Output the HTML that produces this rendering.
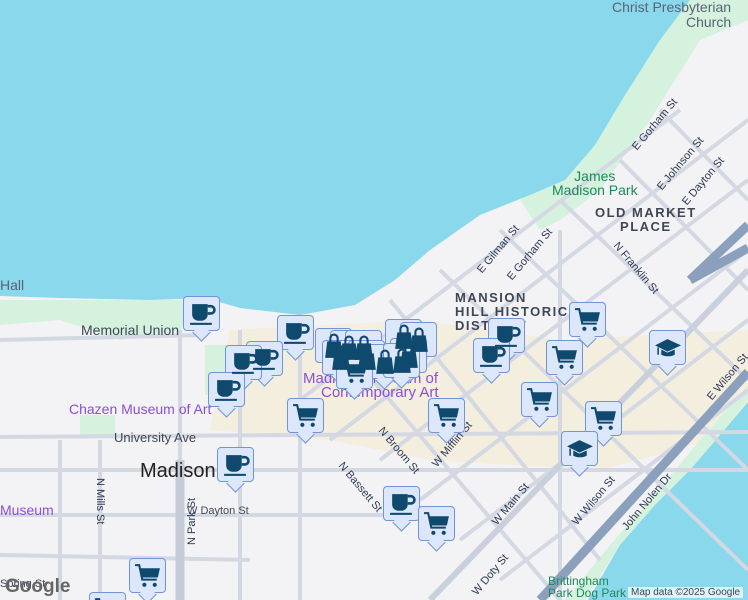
<!DOCTYPE html>
<html style="width:748px;height:600px;overflow:hidden"><head><meta charset="utf-8"><style>
body{margin:0;width:748px;height:600px;overflow:hidden;background:#f3f2f4;font-family:"Liberation Sans",sans-serif;position:relative}
#wrap{position:absolute;left:0;top:0;width:748px;height:600px;overflow:hidden}
svg.map{position:absolute;left:0;top:0}
.m{position:absolute;width:37px;height:35px;background:#dce7fb;border:1.5px solid #6f95d8;border-radius:4px;box-sizing:border-box}
.m:after{content:"";position:absolute;left:11px;bottom:-9px;width:12px;height:12px;background:#dce7fb;border-right:1.5px solid #6f95d8;border-bottom:1.5px solid #6f95d8;transform:rotate(45deg)}
.m svg{position:absolute;left:4px;top:4px;width:28px;height:26px;z-index:2}
.l{position:absolute;font-size:13px;color:#3f4756;white-space:nowrap}
.s{position:absolute;font-size:11px;color:#2c3a55;white-space:nowrap;transform-origin:left top}
</style></head><body><div id="wrap">
<svg class="map" width="748" height="600">
<rect width="748" height="600" fill="#f3f2f4"/>
<path d="M230 330 L420 320 L560 340 L748 330 L748 430 L600 470 L430 460 L330 440 L210 430 Z" fill="#f4ecd9" opacity="0.8"/>
<path d="M0 300 L200 300 L180 330 L120 340 L60 320 L0 325Z" fill="#d5f2de"/>
<path d="M520 200 L590 150 L640 60 L690 0 L748 0 L748 20 L700 40 L650 120 L600 190 L560 220 L540 230Z" fill="#d5f2de"/>
<path d="M565 600 L610 545 L650 500 L700 440 L748 385 L748 400 L690 470 L655 505 L620 545 L585 600Z" fill="#d5f2de"/>
<rect x="205" y="345" width="30" height="50" fill="#d5f2de"/>
<rect x="80" y="415" width="35" height="20" fill="#d5f2de"/>
<path d="M0 0 L690 0 L660 40 L625 95 L595 145 L565 180 L530 195 L480 215 L430 250 L395 280 L355 305 L300 315 L240 308 L205 298 L150 300 L60 298 L0 296Z" fill="#8ad8ec"/>
<path d="M748 402 L690 470 L655 505 L620 545 L588 600 L748 600Z" fill="#8ad8ec"/>
<g stroke="#d3d8e2" stroke-width="4" fill="none">
<line x1="0" y1="437" x2="748" y2="432"/>
<line x1="0" y1="470" x2="748" y2="470"/>
<line x1="0" y1="515" x2="400" y2="515"/>
<line x1="180" y1="330" x2="180" y2="600"/>
<line x1="300" y1="330" x2="300" y2="600"/>
<line x1="240" y1="330" x2="240" y2="600"/>
<line x1="100" y1="440" x2="100" y2="600"/>
<line x1="60" y1="440" x2="60" y2="600"/>
<line x1="0" y1="555" x2="250" y2="560"/>
<line x1="0" y1="340" x2="200" y2="335"/>
</g>
<line x1="180" y1="460" x2="180" y2="600" stroke="#c5ccd8" stroke-width="9"/>
<g stroke="#d3d8e2" stroke-width="4" fill="none">
<line x1="330" y1="440" x2="748" y2="120"/>
<line x1="380" y1="460" x2="748" y2="180"/>
<line x1="420" y1="500" x2="748" y2="250"/>
<line x1="460" y1="540" x2="748" y2="320"/>
<line x1="500" y1="580" x2="748" y2="390"/>
<line x1="300" y1="400" x2="680" y2="110"/>
<line x1="330" y1="330" x2="560" y2="600"/>
<line x1="390" y1="300" x2="600" y2="560"/>
<line x1="440" y1="270" x2="748" y2="570"/>
<line x1="500" y1="230" x2="748" y2="470"/>
<line x1="560" y1="200" x2="748" y2="380"/>
<line x1="620" y1="160" x2="748" y2="290"/>
<line x1="660" y1="110" x2="748" y2="200"/>
<line x1="560" y1="230" x2="560" y2="600"/>
</g>
<line x1="430" y1="600" x2="748" y2="270" stroke="#c9d0dc" stroke-width="6"/>
<line x1="540" y1="600" x2="748" y2="372" stroke="#8aa0bd" stroke-width="9"/>
<path d="M690 280 L748 225 M690 280 L748 248" stroke="#8aa0bd" stroke-width="9"/>
</svg>

<div class="l" style="left:612px;top:0;color:#5a6275;font-size:14px;line-height:15px">Christ Presbyterian<br><span style="margin-left:74px">Church</span></div>
<div class="l" style="left:0;top:277px;font-size:14px;color:#5a6275">Hall</div>
<div class="l" style="left:81px;top:322px;font-size:14px">Memorial Union</div>
<div class="l" style="left:552px;top:169px;color:#1b8a5a;text-align:center;line-height:14px;font-size:14px">James<br>Madison Park</div>
<div class="l" style="left:595px;top:206px;font-weight:bold;letter-spacing:1.5px;text-align:center;line-height:14px">OLD MARKET<br>PLACE</div>
<div class="l" style="left:455px;top:291px;font-weight:bold;letter-spacing:1.5px;line-height:14px">MANSION<br>HILL HISTORIC<br>DISTRICT</div>
<div class="l" style="left:303px;top:372px;color:#8a4fd8;font-size:15px;line-height:14px">Madison Museum of<br><span style="margin-left:18px">Contemporary Art</span></div>
<div class="l" style="left:69px;top:401px;color:#8a4fd8;font-size:14px">Chazen Museum of Art</div>
<div class="l" style="left:114px;top:430px">University Ave</div>
<div class="l" style="left:140px;top:460px;font-size:20px;color:#222">Madison</div>
<div class="l" style="left:0;top:502px;color:#8a4fd8;font-size:14px">Museum</div>
<div class="l" style="left:187px;top:505px;font-size:11px">W Dayton St</div>
<div class="l" style="left:0;top:578px;font-size:11px">Spring St</div>
<div class="l" style="left:5px;top:576px;font-size:19px;color:#666;font-weight:bold">Google</div>
<div class="l" style="left:628px;top:587px;font-size:10px;background:rgba(255,255,255,.7);padding:0 3px">Map data ©2025 Google</div>
<div class="l" style="left:548px;top:575px;color:#1b8a5a;font-size:12px;line-height:12px">Brittingham<br>Park Dog Park</div>
<div class="s" style="left:630px;top:145px;transform:rotate(-50deg)">E Gorham St</div>
<div class="s" style="left:655px;top:185px;transform:rotate(-50deg)">E Johnson St</div>
<div class="s" style="left:680px;top:200px;transform:rotate(-50deg)">E Dayton St</div>
<div class="s" style="left:505px;top:275px;transform:rotate(-50deg)">E Gorham St</div>
<div class="s" style="left:475px;top:268px;transform:rotate(-50deg)">E Gilman St</div>
<div class="s" style="left:620px;top:240px;transform:rotate(50deg)">N Franklin St</div>
<div class="s" style="left:385px;top:425px;transform:rotate(50deg)">N Broom St</div>
<div class="s" style="left:345px;top:460px;transform:rotate(50deg)">N Bassett St</div>
<div class="s" style="left:430px;top:462px;transform:rotate(-50deg)">W Mifflin St</div>
<div class="s" style="left:490px;top:520px;transform:rotate(-50deg)">W Main St</div>
<div class="s" style="left:570px;top:520px;transform:rotate(-50deg)">W Wilson St</div>
<div class="s" style="left:620px;top:525px;transform:rotate(-50deg)">John Nolen Dr</div>
<div class="s" style="left:705px;top:395px;transform:rotate(-50deg)">E Wilson St</div>
<div class="s" style="left:470px;top:590px;transform:rotate(-50deg)">W Doty St</div>
<div class="s" style="left:106px;top:478px;transform:rotate(90deg)">N Mills St</div>
<div class="s" style="left:186px;top:545px;transform:rotate(-90deg)">N Park St</div>
<div id="mk"></div>
</div>
<script>
var cup='<svg viewBox="0 0 27 25"><path d="M4 3h15v10a6 6 0 0 1-6 6h-3a6 6 0 0 1-6-6z" fill="#0f4a6e"/><path d="M19 5h3a3 3 0 0 1 0 7h-3" fill="none" stroke="#0f4a6e" stroke-width="2.5"/><rect x="2" y="21" width="21" height="2" fill="#0f4a6e"/></svg>';
var cart='<svg viewBox="0 0 27 25"><path d="M1 2h4l3 14h14" fill="none" stroke="#0f4a6e" stroke-width="2"/><path d="M6 5h19l-2 9H8z" fill="#0f4a6e"/><circle cx="10" cy="21" r="2" fill="#0f4a6e"/><circle cx="20" cy="21" r="2" fill="#0f4a6e"/></svg>';
var bag='<svg viewBox="0 0 27 25"><path d="M7 8h13l2 16H5z" fill="#0f4a6e"/><path d="M10 9V5a3.5 3.5 0 0 1 7 0v4" fill="none" stroke="#0f4a6e" stroke-width="2"/></svg>';
var cap='<svg viewBox="0 0 27 25"><path d="M1 10l12-6 13 6-13 6z" fill="#0f4a6e"/><path d="M7 14v5c3 2 10 2 13 0v-5l-7 3z" fill="#0f4a6e"/><line x1="4" y1="12" x2="4" y2="19" stroke="#0f4a6e" stroke-width="1.5"/></svg>';
var M=[[bag,315,328],[bag,330,330],[bag,345,330],[bag,385,319],[bag,400,322],[bag,390,338],[bag,322,340],[bag,348,340],[bag,366,344],[bag,383,343],[cup,277,315],[cup,183,296],[cup,246,341],[cup,225,345],[cup,208,372],[cup,217,447],[cup,383,486],[cup,488,318],[cup,473,338],
[cart,336,354],[cart,287,398],[cart,428,398],[cart,521,382],[cart,546,340],[cart,569,302],[cart,585,401],[cart,418,506],[cart,129,558],[cart,89,592],[cap,561,431],[cap,649,330]];
var h='';M.forEach(function(a){h+='<div class="m" style="left:'+a[1]+'px;top:'+a[2]+'px">'+a[0]+'</div>'});
document.getElementById('mk').innerHTML=h;
</script>
</body></html>
